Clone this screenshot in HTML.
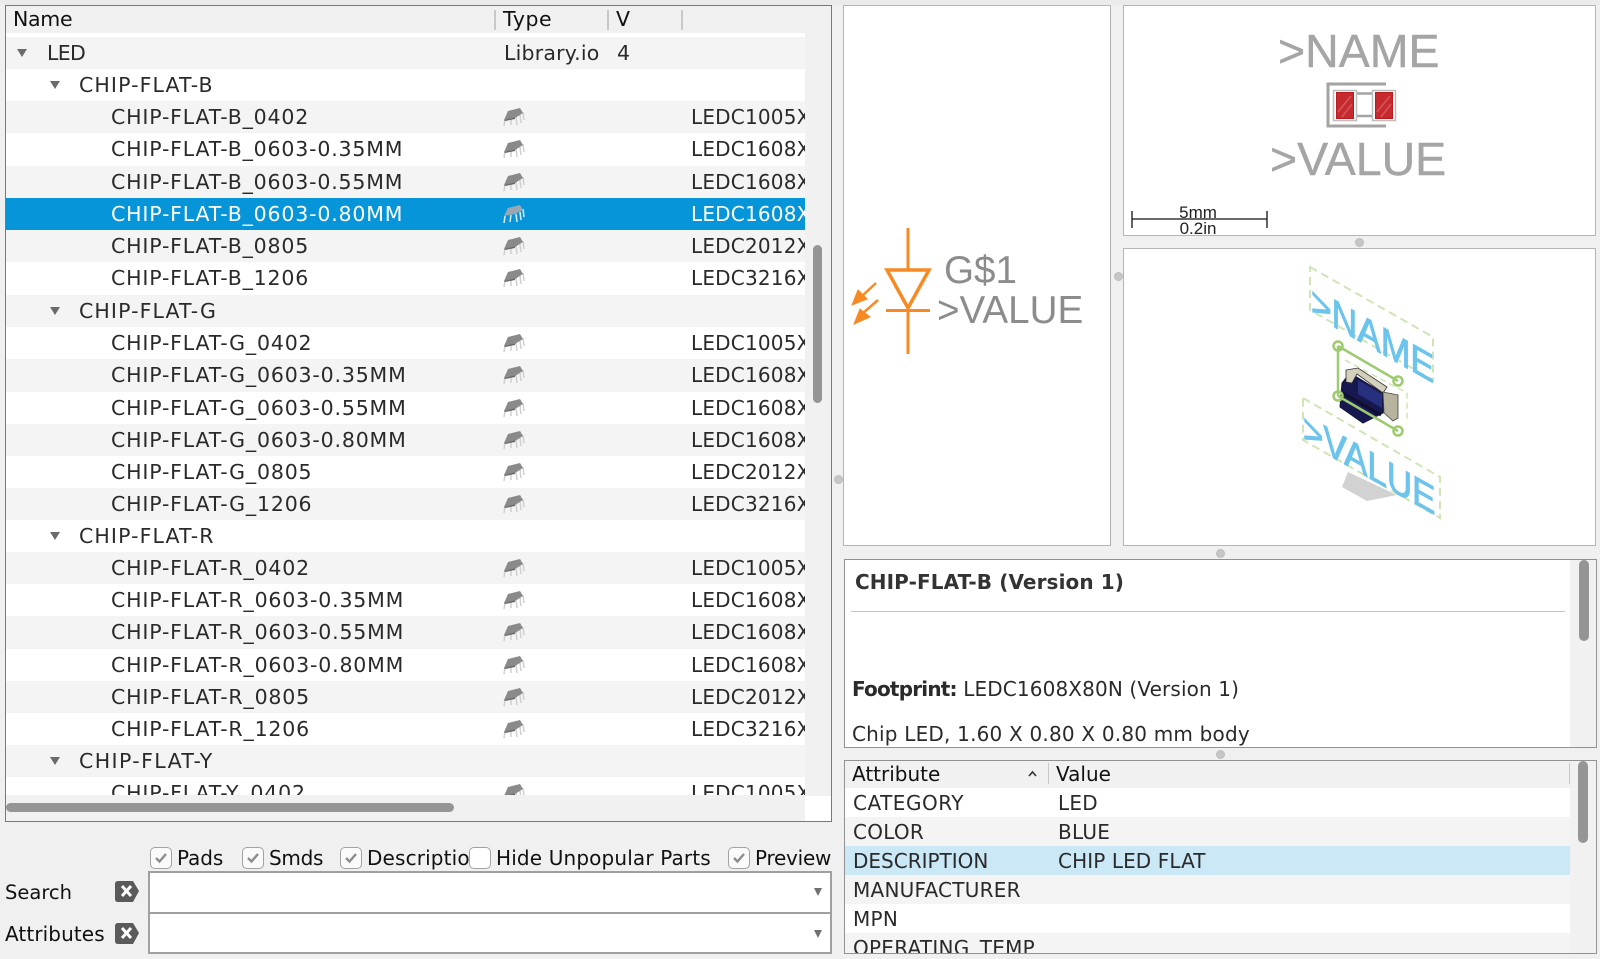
<!DOCTYPE html>
<html><head><meta charset="utf-8">
<style>
html,body{margin:0;padding:0;width:1600px;height:959px;overflow:hidden;background:#f0f0f0;font-family:"DejaVu Sans","Liberation Sans",sans-serif;color:#222}
.a{position:absolute;white-space:nowrap}
#list{position:absolute;left:6px;top:37px;width:799px;height:758px;overflow:hidden}
.r{position:absolute;left:0;width:799px;height:33px;line-height:33px;font-size:20.5px;letter-spacing:.82px;background:#fff;color:#2a2a2a}
.g{background:#f4f4f4}
.r span{position:absolute;white-space:nowrap}
.n{left:105px}.p{left:685px;font-size:20px;letter-spacing:.2px}
.t{left:73px;letter-spacing:1.1px}
.r svg{position:absolute;left:497px;top:6px;width:22px;height:20px}
.s{background:#0695d8;color:#fff;height:32px}
.tri{position:absolute;width:0;height:0;border-left:5px solid transparent;border-right:5px solid transparent;border-top:8px solid #6b6b6b;top:12px}
.h{font-size:20.5px;letter-spacing:.5px;color:#111;line-height:27px;top:6px}
.sep{position:absolute;width:2px;background:#c9c9c9;top:10px;height:20px}
.panel{position:absolute;background:#fff;border:1px solid #b5b5b5;box-sizing:border-box}
.dot{position:absolute;width:9px;height:9px;border-radius:50%;background:#c6c6c6;border:1px solid #bdbdbd;box-sizing:border-box}
.cb{position:absolute;top:847px;width:22px;height:22px;box-sizing:border-box;border:1px solid #a2a2a2;border-radius:5px;background:#fafafa}
.cb svg{position:absolute;left:3px;top:4px}
.lb{font-size:20px;letter-spacing:.15px;color:#111;top:845px;line-height:26px}
.combo{position:absolute;left:148px;width:684px;background:#fff;border:2px solid #a0a0a0;box-sizing:border-box}
.arr{position:absolute;width:0;height:0;border-left:4.5px solid transparent;border-right:4.5px solid transparent;border-top:8px solid #707070;left:814px}
.ar{position:absolute;left:845px;width:725px;height:30px;line-height:31px;font-size:20px;letter-spacing:.25px;color:#2a2a2a;background:#fff}
.ar span{position:absolute;white-space:nowrap}
</style></head><body>
<svg width="0" height="0" style="position:absolute">
<symbol id="c" viewBox="0 0 22 20"><path d="M2 13L1 19M8 11V18M13 10l1 8M17 8l1 8M20 5l1 8" stroke="#d0d0d0" stroke-width="1.500" fill="none"/><path d="M1 13L5 4 17 1 20 6 12 11Z" fill="#8a8a8a"/><path d="M1 13L12 10.500 12 12 2 14Z" fill="#666"/></symbol>
<symbol id="d" viewBox="0 0 22 20"><path d="M2 12L1 19M8 11l-1 7M13 10l1 8M17 8l1 8M20 5l1 8" stroke="#d8ecf8" stroke-width="1.500" fill="none"/><path d="M1 12L5 4 17 1 20 6 12 10Z" fill="#9aa7b2"/></symbol>
</svg>

<div class="a" style="left:0;top:0;width:1600px;height:5px;background:#ebebeb"></div>
<!-- Left panel -->
<div class="a" style="left:5px;top:5px;width:827px;height:817px;box-sizing:border-box;border:1px solid #2c8fd4;background:#f1f1f1"></div>
<div class="a" style="left:6px;top:33px;width:799px;height:4px;background:#fff"></div>
<div class="a h" style="left:13px;letter-spacing:-.3px">Name</div>
<div class="a h" style="left:503px">Type</div>
<div class="a h" style="left:616px">V</div>
<div class="sep" style="left:494px"></div><div class="sep" style="left:607px"></div><div class="sep" style="left:681px"></div>

<div id="list">
<div class="r g" style="top:0"><i class="tri" style="left:11px"></i><span style="left:41px;letter-spacing:-.7px">LED</span><span style="left:498px;letter-spacing:.2px">Library.io</span><span style="left:611px">4</span></div>
<div class="r" style="top:32px"><i class="tri" style="left:44px"></i><span class="t">CHIP-FLAT-B</span></div>
<div class="r g" style="top:64px"><span class="n">CHIP-FLAT-B_0402</span><svg><use href="#c"/></svg><span class="p">LEDC1005X60N</span></div>
<div class="r" style="top:96px"><span class="n">CHIP-FLAT-B_0603-0.35MM</span><svg><use href="#c"/></svg><span class="p">LEDC1608X35N</span></div>
<div class="r g" style="top:129px"><span class="n">CHIP-FLAT-B_0603-0.55MM</span><svg><use href="#c"/></svg><span class="p">LEDC1608X55N</span></div>
<div class="r s" style="top:161px"><span class="n">CHIP-FLAT-B_0603-0.80MM</span><svg><use href="#d"/></svg><span class="p">LEDC1608X80N</span></div>
<div class="r g" style="top:193px"><span class="n">CHIP-FLAT-B_0805</span><svg><use href="#c"/></svg><span class="p">LEDC2012X90N</span></div>
<div class="r" style="top:225px"><span class="n">CHIP-FLAT-B_1206</span><svg><use href="#c"/></svg><span class="p">LEDC3216X90N</span></div>
<div class="r g" style="top:258px"><i class="tri" style="left:44px"></i><span class="t">CHIP-FLAT-G</span></div>
<div class="r" style="top:290px"><span class="n">CHIP-FLAT-G_0402</span><svg><use href="#c"/></svg><span class="p">LEDC1005X60N</span></div>
<div class="r g" style="top:322px"><span class="n">CHIP-FLAT-G_0603-0.35MM</span><svg><use href="#c"/></svg><span class="p">LEDC1608X35N</span></div>
<div class="r" style="top:355px"><span class="n">CHIP-FLAT-G_0603-0.55MM</span><svg><use href="#c"/></svg><span class="p">LEDC1608X55N</span></div>
<div class="r g" style="top:387px"><span class="n">CHIP-FLAT-G_0603-0.80MM</span><svg><use href="#c"/></svg><span class="p">LEDC1608X80N</span></div>
<div class="r" style="top:419px"><span class="n">CHIP-FLAT-G_0805</span><svg><use href="#c"/></svg><span class="p">LEDC2012X90N</span></div>
<div class="r g" style="top:451px"><span class="n">CHIP-FLAT-G_1206</span><svg><use href="#c"/></svg><span class="p">LEDC3216X90N</span></div>
<div class="r" style="top:483px"><i class="tri" style="left:44px"></i><span class="t">CHIP-FLAT-R</span></div>
<div class="r g" style="top:515px"><span class="n">CHIP-FLAT-R_0402</span><svg><use href="#c"/></svg><span class="p">LEDC1005X60N</span></div>
<div class="r" style="top:547px"><span class="n">CHIP-FLAT-R_0603-0.35MM</span><svg><use href="#c"/></svg><span class="p">LEDC1608X35N</span></div>
<div class="r g" style="top:579px"><span class="n">CHIP-FLAT-R_0603-0.55MM</span><svg><use href="#c"/></svg><span class="p">LEDC1608X55N</span></div>
<div class="r" style="top:612px"><span class="n">CHIP-FLAT-R_0603-0.80MM</span><svg><use href="#c"/></svg><span class="p">LEDC1608X80N</span></div>
<div class="r g" style="top:644px"><span class="n">CHIP-FLAT-R_0805</span><svg><use href="#c"/></svg><span class="p">LEDC2012X90N</span></div>
<div class="r" style="top:676px"><span class="n">CHIP-FLAT-R_1206</span><svg><use href="#c"/></svg><span class="p">LEDC3216X90N</span></div>
<div class="r g" style="top:708px"><i class="tri" style="left:44px"></i><span class="t" style="letter-spacing:1.4px">CHIP-FLAT-Y</span></div>
<div class="r" style="top:740px"><span class="n">CHIP-FLAT-Y_0402</span><svg><use href="#c"/></svg><span class="p">LEDC1005X60N</span></div>
</div>
<div class="a" style="left:805px;top:796px;width:26px;height:25px;background:#fff"></div>
<div class="a" style="left:813px;top:245px;width:9px;height:158px;border-radius:5px;background:#959595"></div>
<div class="a" style="left:6px;top:803px;width:448px;height:9px;border-radius:5px;background:#959595"></div>

<!-- Bottom controls -->
<div class="cb" style="left:150px"><svg width="14" height="12"><path d="M2 6l3.500 3.500L12 2" stroke="#8c8c8c" stroke-width="2.400" fill="none"/></svg></div>
<div class="a lb" style="left:177px;letter-spacing:-.1px">Pads</div>
<div class="cb" style="left:242px"><svg width="14" height="12"><path d="M2 6l3.500 3.500L12 2" stroke="#8c8c8c" stroke-width="2.400" fill="none"/></svg></div>
<div class="a lb" style="left:269px;letter-spacing:-.3px">Smds</div>
<div class="cb" style="left:340px"><svg width="14" height="12"><path d="M2 6l3.500 3.500L12 2" stroke="#8c8c8c" stroke-width="2.400" fill="none"/></svg></div>
<div class="a lb" style="left:367px;width:102px;overflow:hidden">Description</div>
<div class="cb" style="left:469px;background:#fff"></div>
<div class="a lb" style="left:496px">Hide Unpopular Parts</div>
<div class="cb" style="left:728px"><svg width="14" height="12"><path d="M2 6l3.500 3.500L12 2" stroke="#8c8c8c" stroke-width="2.400" fill="none"/></svg></div>
<div class="a lb" style="left:755px;letter-spacing:-.25px">Preview</div>

<div class="a" style="left:5px;top:880px;font-size:19.5px;line-height:26px;color:#111">Search</div>
<div class="a" style="left:5px;top:921px;font-size:20px;line-height:26px;letter-spacing:.1px;color:#111">Attributes</div>
<svg class="a" style="left:115px;top:881px" width="25" height="21"><path d="M3 0H18L24 10 18 21H3Q0 21 0 18V3Q0 0 3 0Z" fill="#5a5a5a"/><path d="M7 5l9 10M16 5L7 15" stroke="#fff" stroke-width="3"/></svg>
<svg class="a" style="left:115px;top:923px" width="25" height="21"><path d="M3 0H18L24 10 18 21H3Q0 21 0 18V3Q0 0 3 0Z" fill="#5a5a5a"/><path d="M7 5l9 10M16 5L7 15" stroke="#fff" stroke-width="3"/></svg>
<div class="combo" style="top:871px;height:43px"></div>
<div class="combo" style="top:912px;height:42px"></div>
<div class="arr" style="top:888px"></div>
<div class="arr" style="top:930px"></div>

<!-- Symbol panel -->
<div class="panel" style="left:843px;top:5px;width:268px;height:541px"></div>
<svg class="a" style="left:843px;top:200px" width="268" height="170">
<g stroke="#f78a23" fill="none" stroke-width="3">
<path d="M65 28V70M65 110V154M43 110.500H87"/>
<path d="M44 70H86L65 108Z" stroke-width="3.500"/>
</g>
<g fill="#f78a23" stroke="#f78a23">
<path d="M33 83L18 97" stroke-width="2.500"/><path d="M9 105L15 90 24 99Z"/>
<path d="M35 100L19 114" stroke-width="2.500"/><path d="M11 124L17 109 27 117Z"/>
</g>
<text x="101" y="83" font-family="Liberation Sans" font-size="38.600" fill="#8c8c8c">G$1</text>
<text x="94" y="123" font-family="Liberation Sans" font-size="38.600" fill="#8c8c8c">&gt;VALUE</text>
</svg>

<!-- Package panel -->
<div class="panel" style="left:1123px;top:5px;width:473px;height:231px"></div>
<svg class="a" style="left:1123px;top:5px" width="473" height="230" viewBox="1123 5 473 230">
<text x="1278" y="67" font-family="Liberation Sans" font-size="46.500" fill="#a5a5a5" stroke="#a5a5a5" stroke-width=".4">&gt;NAME</text>
<text x="1270" y="175" font-family="Liberation Sans" font-size="46.500" fill="#a5a5a5" stroke="#a5a5a5" stroke-width=".4">&gt;VALUE</text>
<path d="M1386 84H1328V126H1386" fill="none" stroke="#a3a3a3" stroke-width="3"/>
<path d="M1356 93.500H1372M1356 116H1372" stroke="#a3a3a3" stroke-width="2.500"/>
<rect x="1336.500" y="92.500" width="17" height="26" fill="#c62a2e" stroke="#b81a1e"/>
<rect x="1375.500" y="92.500" width="17" height="26" fill="#c62a2e" stroke="#b81a1e"/>
<path d="M1338 112L1351 96M1342 117L1352 104M1377 112L1390 96M1381 117L1391 104" stroke="#d5565a" stroke-width="1.500"/>
<rect x="1333.500" y="90.500" width="23" height="30" fill="none" stroke="#bdbdbd" stroke-width="1.500"/>
<rect x="1372.500" y="90.500" width="23" height="30" fill="none" stroke="#bdbdbd" stroke-width="1.500"/>
<path d="M1132 211V228M1267 211V228M1132 219H1267" stroke="#111" stroke-width="1.300" fill="none"/>
<text x="1198" y="218" text-anchor="middle" font-family="Liberation Sans" font-size="17" fill="#222">5mm</text>
<text x="1198" y="234" text-anchor="middle" font-family="Liberation Sans" font-size="17" fill="#222">0.2in</text>
</svg>

<!-- 3D panel -->
<div class="panel" style="left:1123px;top:248px;width:473px;height:298px"></div>
<svg class="a" style="left:1123px;top:248px" width="473" height="297" viewBox="1123 248 473 297">
<path d="M1342 487L1348 472 1397 495 1367 501Z" fill="#d2d2d2"/>
<path d="M1310 267L1433 337V380L1310 310Z" fill="none" stroke="#cfe5b5" stroke-width="2" stroke-dasharray="8 5"/>
<path d="M1303 398L1440 477V518L1303 440Z" fill="none" stroke="#cfe5b5" stroke-width="2" stroke-dasharray="8 5"/>
<text transform="matrix(.885 .5 0 1 1311 314)" font-family="Liberation Sans" font-size="40" fill="#6cc3ec" stroke="#6cc3ec" stroke-width="1">&gt;NAME</text>
<text transform="matrix(.874 .49 0 1 1303 441)" font-family="Liberation Sans" font-size="40" fill="#6cc3ec" stroke="#6cc3ec" stroke-width="1">&gt;VALUE</text>
<path d="M1345 360L1407 393V423" fill="none" stroke="#cfe5b5" stroke-width="1.500" stroke-dasharray="6 4"/>
<path d="M1342 383L1350 373 1383 393V413L1363 423 1340 407Z" fill="#181850" stroke="#15153a" stroke-width="1"/>
<path d="M1341 392L1381 415" stroke="#0e0e2e" stroke-width="3"/>
<path d="M1358 380L1382 394V408L1358 394Z" fill="#26307f"/>
<path d="M1346 370L1358 368 1387 387 1383 393 1357 374 1352 383 1346 382Z" fill="#d5d0bb" stroke="#333" stroke-width=".8"/>
<path d="M1383 392L1398 395V418L1393 421 1384 413Z" fill="#b8b39d" stroke="#444" stroke-width=".8"/>
<g fill="none" stroke="#9dcb6f" stroke-width="2.500">
<path d="M1338 346L1398 381M1338 396L1398 431M1338 346V396"/>
<circle cx="1338" cy="346" r="4.500"/><circle cx="1398" cy="381" r="4.500"/><circle cx="1338" cy="396" r="4.500"/><circle cx="1398" cy="431" r="4.500"/>
</g>
</svg>

<div class="dot" style="left:834px;top:475px"></div>
<div class="dot" style="left:1114px;top:272px"></div>
<div class="dot" style="left:1355px;top:238px"></div>
<div class="dot" style="left:1216px;top:549px"></div>
<div class="dot" style="left:1216px;top:750px"></div>

<!-- Description -->
<div class="panel" style="left:844px;top:559px;width:753px;height:189px;border-color:#929292;overflow:hidden">
<div class="a" style="left:725px;top:0;width:27px;height:187px;background:#f1f1f1"></div>
<div class="a" style="left:734px;top:0;width:10px;height:81px;border-radius:5px;background:#959595"></div>
<div class="a" style="left:10px;top:10px;font-size:20px;font-weight:bold;line-height:24px;color:#333;letter-spacing:.1px">CHIP-FLAT-B (Version 1)</div>
<div class="a" style="left:6px;top:51px;width:714px;height:1px;background:#c4c4c4"></div>
<div class="a" style="left:7px;top:117px;font-size:20px;line-height:24px;color:#2a2a2a;letter-spacing:.13px"><b style="letter-spacing:-.8px">Footprint:</b> LEDC1608X80N (Version 1)</div>
<div class="a" style="left:7px;top:162px;font-size:20px;line-height:24px;color:#2a2a2a;letter-spacing:.2px">Chip LED, 1.60 X 0.80 X 0.80 mm body</div>
</div>

<!-- Attributes -->
<div class="panel" style="left:844px;top:760px;width:753px;height:194px;border-color:#929292;background:#f1f1f1"></div>
<div class="a" style="left:852px;top:761px;font-size:20px;line-height:27px;color:#111">Attribute</div>
<div class="a" style="left:1056px;top:761px;font-size:20px;line-height:27px;color:#111">Value</div>
<div class="sep" style="left:1048px;top:763px;height:21px;width:1px"></div>
<div class="sep" style="left:1569px;top:763px;height:21px;width:1px"></div>
<svg class="a" style="left:1027px;top:770px" width="11" height="8"><path d="M2 6L5.500 2 9 6" fill="none" stroke="#333" stroke-width="1.600"/></svg>
<div style="position:absolute;left:845px;top:788px;width:725px;height:165px;overflow:hidden">
<div class="ar" style="left:0;top:0"><span style="left:8px;letter-spacing:.5px">CATEGORY</span><span style="left:213px">LED</span></div>
<div class="ar" style="left:0;top:29px;background:#f4f4f4"><span style="left:8px">COLOR</span><span style="left:213px">BLUE</span></div>
<div class="ar" style="left:0;top:58px;background:#cbe8f7"><span style="left:8px;letter-spacing:0">DESCRIPTION</span><span style="left:213px;letter-spacing:.1px">CHIP LED FLAT</span></div>
<div class="ar" style="left:0;top:87px;background:#f4f4f4"><span style="left:8px">MANUFACTURER</span></div>
<div class="ar" style="left:0;top:116px"><span style="left:8px">MPN</span></div>
<div class="ar" style="left:0;top:145px;background:#f4f4f4"><span style="left:8px">OPERATING_TEMP</span></div>
</div>
<div class="a" style="left:1578px;top:761px;width:10px;height:82px;border-radius:5px;background:#959595"></div>
</body></html>
